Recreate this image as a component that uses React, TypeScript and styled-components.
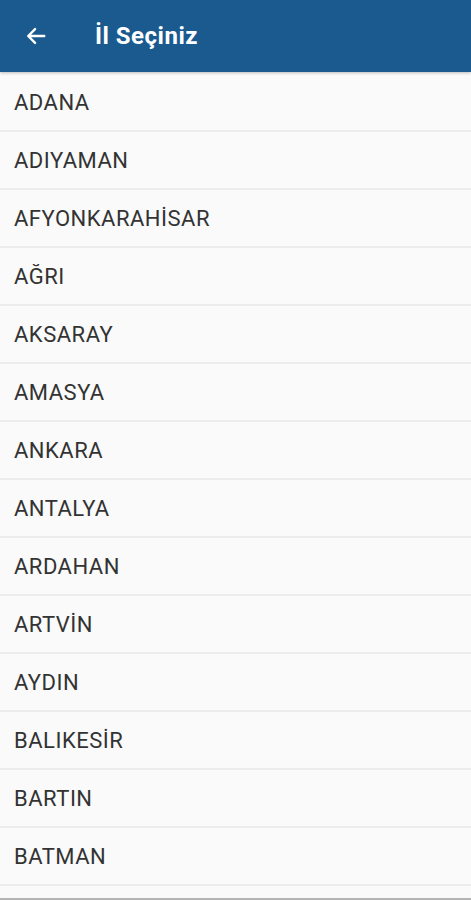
import React from 'react'
import styled, { createGlobalStyle } from 'styled-components'

const GlobalStyle = createGlobalStyle`
  html, body {
    margin: 0;
    padding: 0;
    background: #fafafa;
  }
`

const Screen = styled.div`
  width: 471px;
  height: 900px;
  display: flex;
  flex-direction: column;
  overflow: hidden;
  background: #fafafa;
  font-family: Roboto, 'Noto Sans', sans-serif;
  box-sizing: border-box;
  border-bottom: 2px solid #b4b4b4;
`

const Header = styled.header`
  height: 72px;
  flex-shrink: 0;
  background: #1b5a8e;
  display: flex;
  align-items: center;
  padding-left: 24px;
  box-shadow: 0 1px 3px rgba(0, 0, 0, 0.25);
  position: relative;
  z-index: 1;
`

const BackButton = styled.button`
  background: none;
  border: none;
  padding: 0;
  width: 24px;
  height: 24px;
  display: flex;
  align-items: center;
  justify-content: center;
  cursor: pointer;
`

const Title = styled.h1`
  margin: 0 0 0 47px;
  color: #fff;
  font-size: 24px;
  font-weight: 700;
  letter-spacing: 0.5px;
`

const List = styled.ul`
  list-style: none;
  margin: 0;
  padding: 2px 0 0;
  flex: 1;
  overflow: hidden;
`

const Row = styled.li`
  height: 56px;
  display: flex;
  align-items: center;
  padding-left: 14px;
  border-bottom: 2px solid #ececec;
  color: #333;
  font-size: 22px;
  letter-spacing: 0.5px;
  cursor: pointer;
`

const cities = [
  'ADANA',
  'ADIYAMAN',
  'AFYONKARAHİSAR',
  'AĞRI',
  'AKSARAY',
  'AMASYA',
  'ANKARA',
  'ANTALYA',
  'ARDAHAN',
  'ARTVİN',
  'AYDIN',
  'BALIKESİR',
  'BARTIN',
  'BATMAN',
]

export default function App() {
  return (
    <>
      <GlobalStyle />
      <Screen>
        <Header>
          <BackButton aria-label="Geri">
            <svg width="22" height="22" viewBox="0 0 24 24" fill="none">
              <path
                d="M21 12H4M11 4.5L3.5 12L11 19.5"
                stroke="#fff"
                strokeWidth="2.6"
                strokeLinecap="round"
                strokeLinejoin="round"
              />
            </svg>
          </BackButton>
          <Title>İl Seçiniz</Title>
        </Header>
        <List>
          {cities.map((c) => (
            <Row key={c}>{c}</Row>
          ))}
        </List>
      </Screen>
    </>
  )
}
